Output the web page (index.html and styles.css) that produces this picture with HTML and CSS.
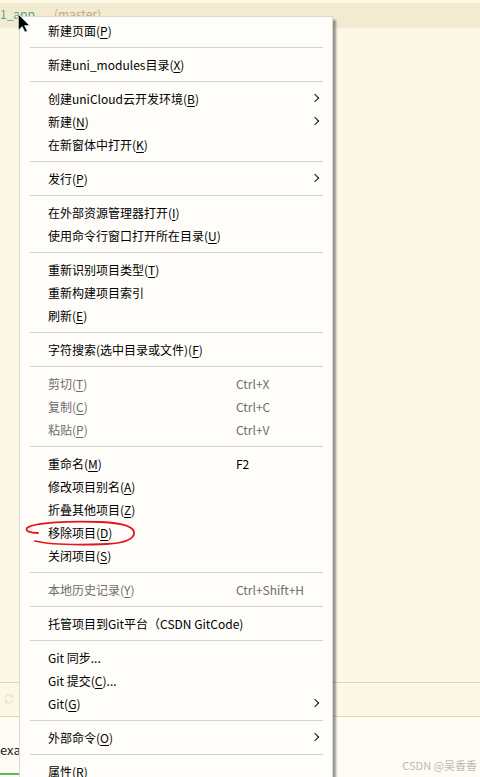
FILE: index.html
```html
<!DOCTYPE html>
<html lang="zh-CN">
<head>
<meta charset="UTF-8">
<meta name="viewport" content="width=device-width, initial-scale=1.0">
<title>项目右键菜单</title>
<link rel="stylesheet" href="styles.css">
</head>
<body>

<div class="tree">
  <div class="top-gap"></div>
  <div class="project-row">
    <span class="proj">1_app</span>
    <span class="branch">(master)</span>
  </div>
  <div class="tree-space"></div>
  <div class="status-band">
    <svg class="sync" width="12" height="12" viewBox="0 0 12 12">
      <path d="M2 5 A4 4 0 0 1 9.5 4 M9.5 1.5 V4 H7 M10 7 A4 4 0 0 1 2.5 8 M2.5 10.5 V8 H5" fill="none" stroke="#e8dcb8" stroke-width="1"/>
    </svg>
  </div>
  <div class="bottom-panel">
    <div class="tab">example</div>
  </div>
</div>

<!-- 右键菜单 -->
<div class="menu">
  <div class="mi"><span>新建页面(<u>P</u>)</span></div>
  <div class="sep"></div>
  <div class="mi"><span>新建uni_modules目录(<u>X</u>)</span></div>
  <div class="sep"></div>
  <div class="mi sub"><span>创建uniCloud云开发环境(<u>B</u>)</span></div>
  <div class="mi sub"><span>新建(<u>N</u>)</span></div>
  <div class="mi"><span>在新窗体中打开(<u>K</u>)</span></div>
  <div class="sep"></div>
  <div class="mi sub"><span>发行(<u>P</u>)</span></div>
  <div class="sep"></div>
  <div class="mi"><span>在外部资源管理器打开(<u>I</u>)</span></div>
  <div class="mi"><span>使用命令行窗口打开所在目录(<u>U</u>)</span></div>
  <div class="sep"></div>
  <div class="mi"><span>重新识别项目类型(<u>T</u>)</span></div>
  <div class="mi"><span>重新构建项目索引</span></div>
  <div class="mi"><span>刷新(<u>E</u>)</span></div>
  <div class="sep"></div>
  <div class="mi"><span>字符搜索(选中目录或文件)(<u>F</u>)</span></div>
  <div class="sep"></div>
  <div class="mi off"><span>剪切(<u>T</u>)</span><span class="key">Ctrl+X</span></div>
  <div class="mi off"><span>复制(<u>C</u>)</span><span class="key">Ctrl+C</span></div>
  <div class="mi off"><span>粘贴(<u>P</u>)</span><span class="key">Ctrl+V</span></div>
  <div class="sep"></div>
  <div class="mi"><span>重命名(<u>M</u>)</span><span class="key">F2</span></div>
  <div class="mi"><span>修改项目别名(<u>A</u>)</span></div>
  <div class="mi"><span>折叠其他项目(<u>Z</u>)</span></div>
  <div class="mi"><span>移除项目(<u>D</u>)</span></div>
  <div class="mi"><span>关闭项目(<u>S</u>)</span></div>
  <div class="sep"></div>
  <div class="mi off"><span>本地历史记录(<u>Y</u>)</span><span class="key">Ctrl+Shift+H</span></div>
  <div class="sep"></div>
  <div class="mi"><span>托管项目到Git平台（CSDN GitCode)</span></div>
  <div class="sep"></div>
  <div class="mi"><span>Git 同步...</span></div>
  <div class="mi"><span>Git 提交(<u>C</u>)...</span></div>
  <div class="mi sub"><span>Git(<u>G</u>)</span></div>
  <div class="sep"></div>
  <div class="mi sub"><span>外部命令(<u>O</u>)</span></div>
  <div class="sep"></div>
  <div class="mi"><span>属性(<u>R</u>)</span></div>
</div>

<!-- 标注圈 -->
<svg class="mark" width="120" height="32" viewBox="0 0 120 32">
  <path d="M17 15 C9 15 4 13 6 10 C14 4 50 3 80 4 C100 5 112 8 113 14 C114 21 104 25 86 26 C60 27 30 27 14 23" fill="none" stroke="#e3161e" stroke-width="1.8" stroke-linecap="round"/>
</svg>

<svg class="cursor" width="13" height="19" viewBox="0 0 13 19">
  <path d="M0.5 0.5 L0.5 16 L4.2 12.4 L7 18 L9.2 17 L6.5 11.5 L11.5 11.5 Z" fill="#000" stroke="#bfefef" stroke-width="0.6"/>
</svg>

<div class="watermark">CSDN @吴香香</div>

</body>
</html>
```

FILE: styles.css
```css
body {
  margin: 0;
  width: 480px;
  height: 777px;
  overflow: hidden;
  position: relative;
  font-family: "Noto Sans CJK SC", "Noto Sans", sans-serif;
  font-size: 12px;
  background: #fdf8e6;
}

.tree {
  display: flex;
  flex-direction: column;
  height: 777px;
}

.top-gap {
  height: 3px;
}

.project-row {
  height: 25px;
  background: #f3ead2;
  display: flex;
  align-items: flex-start;
  gap: 19px;
  padding-top: 3px;
  box-sizing: border-box;
  line-height: 16px;
  font-size: 12px;
}

.proj {
  color: #5aa97c;
}

.branch {
  color: #c2aa7c;
}

.tree-space {
  flex: 1;
}

.status-band {
  height: 25px;
  border-top: 1px solid #e3d5a9;
  border-bottom: 1px solid #e3d5a9;
  padding: 8px 0 0 3px;
}

.bottom-panel {
  height: 60px;
  background: #fefcf4;
}

.tab {
  width: 60px;
  margin-top: 24px;
  line-height: 18px;
  padding-bottom: 14px;
  font-size: 13px;
  color: #222;
  border-bottom: 2px solid #5cb85c;
  white-space: nowrap;
}

/* 右键菜单 */
.menu {
  position: absolute;
  left: 19px;
  top: 16px;
  width: 314px;
  box-sizing: border-box;
  background: #fefdf9;
  border: 1px solid #d9d9d9;
  padding: 2px 0 6px;
  box-shadow: 3px 4px 2px rgba(0,0,0,0.4);
  color: #000;
}

.mi {
  height: 23px;
  line-height: 23px;
  display: grid;
  grid-template-columns: 188px 1fr;
  padding: 0 11px 0 28px;
  position: relative;
  white-space: nowrap;
}

.mi u {
  text-decoration: underline;
  text-underline-offset: 2px;
}

.mi.off {
  color: #6d6d6d;
}

.mi.sub::after {
  content: "";
  position: absolute;
  right: 14px;
  top: 8px;
  width: 5px;
  height: 5px;
  border-right: 1.3px solid #111;
  border-top: 1.3px solid #111;
  transform: rotate(45deg);
}

.sep {
  height: 1px;
  background: #d2d2d2;
  margin: 5px 9px 5px 10px;
}

.mark {
  position: absolute;
  left: 21px;
  top: 518px;
}

.cursor {
  position: absolute;
  left: 18px;
  top: 14px;
}

.watermark {
  position: absolute;
  right: 3px;
  top: 757px;
  font-size: 11px;
  line-height: 16px;
  color: #b9b9b9;
  white-space: nowrap;
}
```
